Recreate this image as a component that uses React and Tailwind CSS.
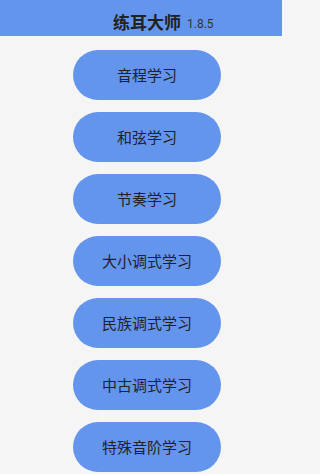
const items = [
  "音程学习",
  "和弦学习",
  "节奏学习",
  "大小调式学习",
  "民族调式学习",
  "中古调式学习",
  "特殊音阶学习",
];

export default function App() {
  return (
    <div
      className="min-h-screen bg-[#f5f5f5]"
      style={{ fontFamily: '"Noto Sans CJK SC", Roboto, sans-serif' }}
    >
      <div className="w-[282px]">
        {/* 顶栏 */}
        <div className="h-[36px] bg-[#6495ed] flex items-end justify-center pb-[6px] pl-[12px]">
          <span className="relative text-[17px] leading-none font-bold text-[#222]">
            练耳大师
            <span
              className="absolute left-full bottom-0 ml-[6px] text-[12px] leading-none font-normal text-[#333] whitespace-nowrap"
              style={{ fontFamily: "Roboto, sans-serif" }}
            >
              1.8.5
            </span>
          </span>
        </div>

        {/* 菜单按钮 */}
        <div className="flex flex-col items-center gap-[12px] pt-[14px] pl-[12px]">
          {items.map((label) => (
            <button
              key={label}
              className="w-[148px] h-[50px] rounded-full bg-[#6495ed] text-[15px] text-[#222] flex items-center justify-center"
            >
              {label}
            </button>
          ))}
        </div>
      </div>
    </div>
  );
}
